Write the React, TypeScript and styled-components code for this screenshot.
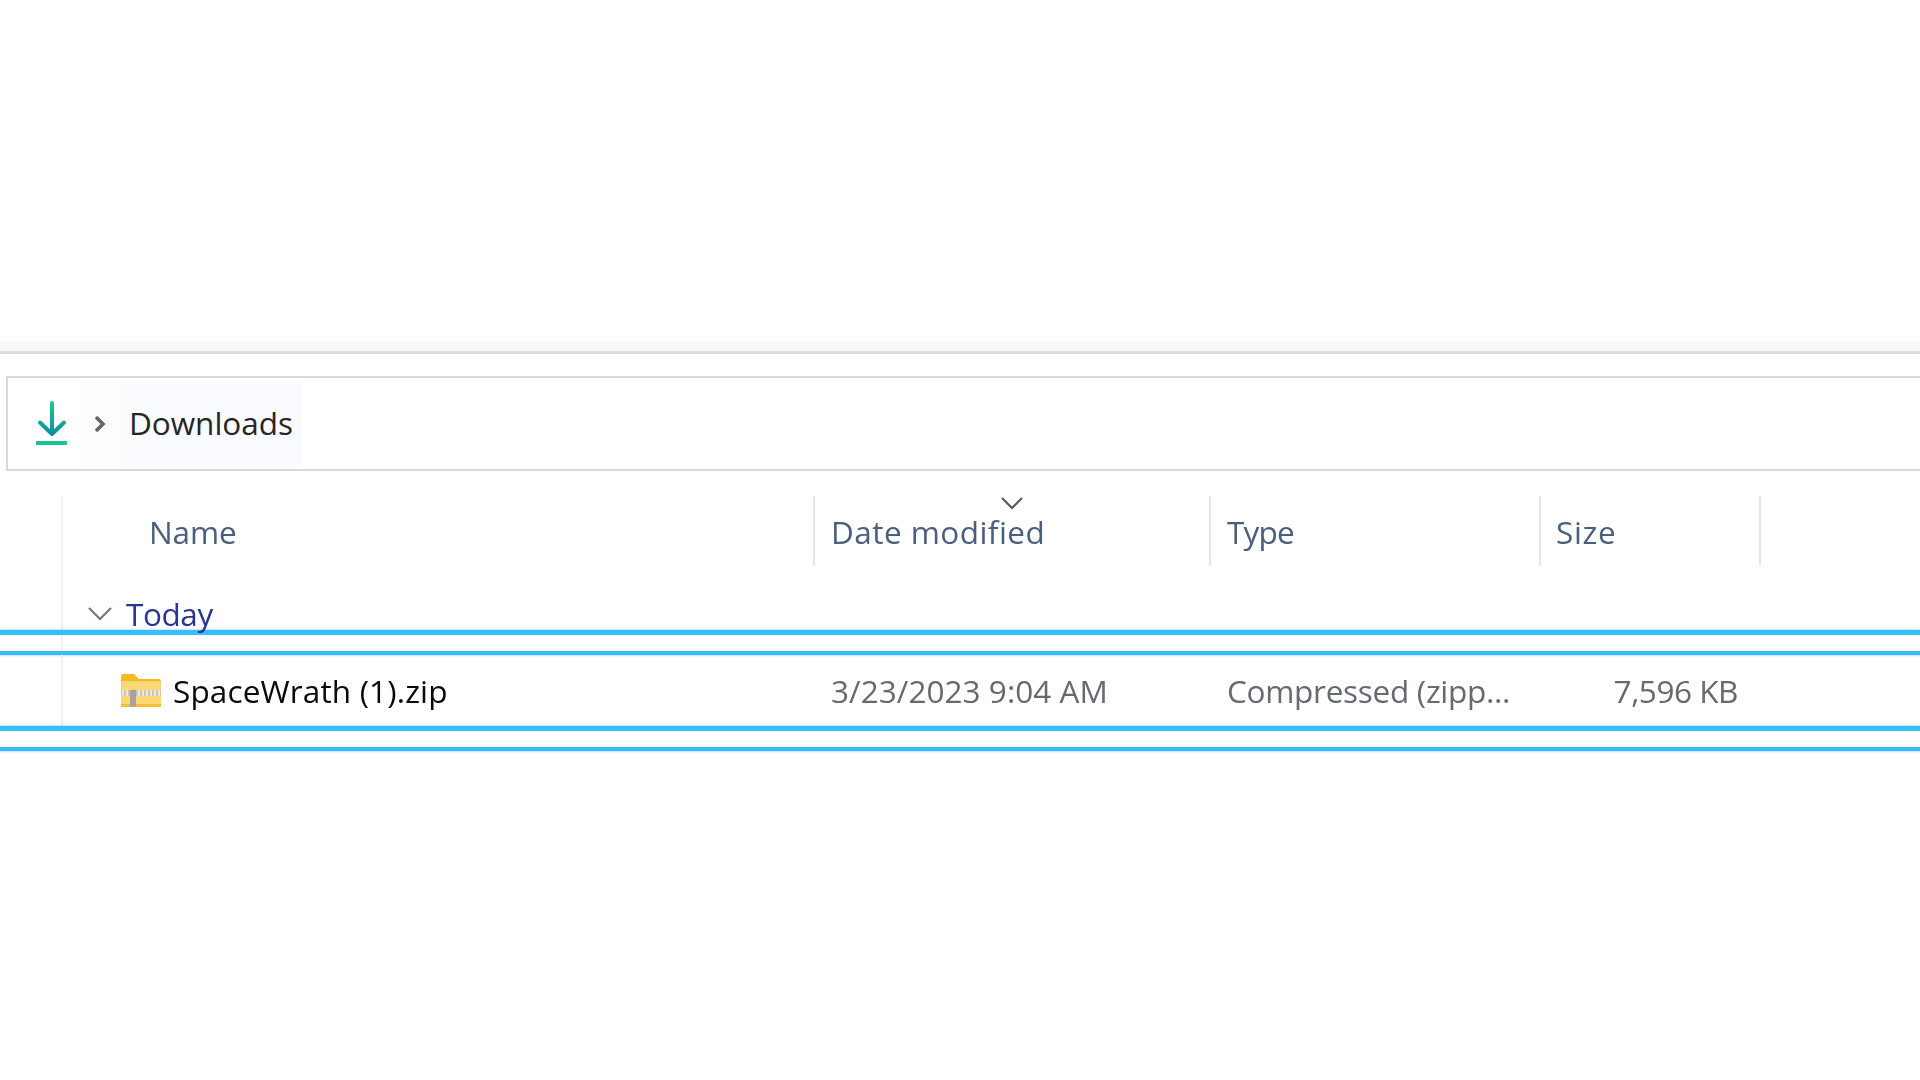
import styled, { createGlobalStyle } from "styled-components";

const GlobalStyle = createGlobalStyle`
  html, body {
    margin: 0;
    padding: 0;
    background: #fff;
  }
  body {
    font-family: "Open Sans", "Noto Sans", sans-serif;
    font-size: 30px;
    overflow: hidden;
  }
`;

const Page = styled.div`
  width: 1920px;
  height: 1080px;
  padding-top: 342px;
  box-sizing: border-box;
  overflow: hidden;
  filter: blur(0.45px);
`;

const TopBand = styled.div`
  height: 9px;
  background: #f8f8f8;
  border-bottom: 3px solid #dcdcdc;
`;

const AddressBar = styled.div`
  display: flex;
  height: 83px;
  margin: 22px 0 25px 6px;
  border: solid #d9d9d9;
  border-width: 2px 0 2px 2px;
  padding: 4px 0;
`;

const AddressCell = styled.div<{ $width: number; $tint?: string; $shift?: number }>`
  display: flex;
  align-items: center;
  justify-content: center;
  width: ${(p) => p.$width}px;
  padding-left: ${(p) => p.$shift || 0}px;
  box-sizing: border-box;
  background: ${(p) => p.$tint || "transparent"};
`;

const Crumb = styled.span`
  font-size: 31.5px;
  letter-spacing: 0;
  padding-bottom: 3px;
  color: #262626;
`;

const Rail = styled.div<{ $height: number }>`
  height: ${(p) => p.$height}px;
  margin-left: 61px;
  border-left: 2px solid #f0f0f0;
  box-sizing: border-box;
`;

const Columns = styled(Rail)`
  display: grid;
  grid-template-columns: 752px 396px 330px 220px;
`;

const HeaderCell = styled.div<{ $pad: number; $tracking: number }>`
  position: relative;
  display: flex;
  align-items: center;
  padding-left: ${(p) => p.$pad}px;
  border-right: 2px solid #e6e6e6;
  font-size: 31.5px;
  letter-spacing: ${(p) => p.$tracking}px;
  color: #4a5f7e;
`;

const SortMark = styled.svg`
  position: absolute;
  top: 1px;
  left: 186px;
`;

const GroupRow = styled(Rail)`
  display: flex;
  align-items: flex-end;
  padding: 0 0 0 25px;
  gap: 14px;
`;

const GroupLabel = styled.span`
  font-size: 31.5px;
  letter-spacing: -0.4px;
  line-height: 44px;
  margin-bottom: -6px;
  color: #29358f;
`;

const GroupChevron = styled.svg`
  margin-bottom: 9px;
`;

const SelectionBand = styled.div`
  height: 25px;
  box-sizing: border-box;
  border-top: 5px solid #36bdfb;
  border-bottom: 4px solid #36bdfb;
  box-shadow: 0 -1px 2px rgba(90, 160, 240, 0.35), 0 1px 2px rgba(90, 160, 240, 0.35);
`;

const DataCell = styled.div<{ $pad?: number; $right?: boolean; $tracking: number }>`
  display: flex;
  align-items: center;
  padding-left: ${(p) => p.$pad || 0}px;
  padding-right: ${(p) => (p.$right ? 23 : 0)}px;
  justify-content: ${(p) => (p.$right ? "flex-end" : "flex-start")};
  font-size: 31.5px;
  letter-spacing: ${(p) => p.$tracking}px;
  color: #666a70;
  white-space: nowrap;
`;

const FileName = styled(DataCell)`
  color: #0a0a0a;
  gap: 12px;
`;

const DownloadIcon = () => (
  <svg width="34" height="46" viewBox="0 0 34 46" fill="none">
    <defs>
      <linearGradient id="dl" x1="0" y1="0" x2="0" y2="1">
        <stop offset="0" stopColor="#1ec68f" />
        <stop offset="1" stopColor="#0b8f9c" />
      </linearGradient>
    </defs>
    <path
      d="M17 2V33M5 21.5 17 33 29 21.5"
      stroke="url(#dl)"
      strokeWidth="4"
      strokeLinecap="round"
      strokeLinejoin="round"
    />
    <rect x="1" y="40" width="31" height="4" rx="1" fill="#1fbf94" />
  </svg>
);

const ChevronRight = () => (
  <svg width="14" height="18" viewBox="0 0 14 18" fill="none">
    <path d="M3 2 10 9 3 16" stroke="#666" strokeWidth="3.6" />
  </svg>
);

const ZipFolder = () => (
  <svg width="40" height="33" viewBox="0 0 40 33">
    <path d="M0 2a2 2 0 0 1 2-2h11l5 5h20a2 2 0 0 1 2 2v4H0Z" fill="#f6b91f" />
    <rect x="0" y="7" width="40" height="26" rx="1.5" fill="#fbd875" />
    <rect x="0" y="30" width="40" height="3" fill="#f5bd3a" />
    <rect x="0" y="16" width="40" height="6" fill="#c9c6b8" />
    <path
      d="M2 16v6M6 16v6M18 16v6M22 16v6M26 16v6M30 16v6M34 16v6M38 16v6"
      stroke="#f4f1e4"
      strokeWidth="1.6"
    />
    <rect x="9" y="16" width="6" height="17" fill="#a3a39a" />
  </svg>
);

const App = () => {
  return (
    <>
      <GlobalStyle />
      <Page>
        <TopBand />
        <AddressBar>
          <AddressCell $width={72} $shift={16}>
            <DownloadIcon />
          </AddressCell>
          <AddressCell $width={40} $tint="#fdfdfe">
            <ChevronRight />
          </AddressCell>
          <AddressCell $width={182} $tint="#fafbfe">
            <Crumb>Downloads</Crumb>
          </AddressCell>
        </AddressBar>

        <Columns $height={70}>
          <HeaderCell $pad={86} $tracking={-0.15}>
            Name
          </HeaderCell>
          <HeaderCell $pad={16} $tracking={0.45}>
            Date modified
            <SortMark width="22" height="13" viewBox="0 0 22 13" fill="none">
              <path d="M1 1 11 11 21 1" stroke="#555" strokeWidth="2" />
            </SortMark>
          </HeaderCell>
          <HeaderCell $pad={16} $tracking={-0.8}>
            Type
          </HeaderCell>
          <HeaderCell $pad={15} $tracking={0.7}>
            Size
          </HeaderCell>
        </Columns>

        <GroupRow $height={64}>
          <GroupChevron width="24" height="14" viewBox="0 0 24 14" fill="none">
            <path d="M1 1 12 12 23 1" stroke="#777" strokeWidth="2.2" />
          </GroupChevron>
          <GroupLabel>Today</GroupLabel>
        </GroupRow>

        <SelectionBand>
          <Rail $height={16} />
        </SelectionBand>

        <Columns $height={71}>
          <FileName $pad={58} $tracking={0.15}>
            <ZipFolder />
            SpaceWrath (1).zip
          </FileName>
          <DataCell $pad={16} $tracking={0.05}>
            3/23/2023 9:04 AM
          </DataCell>
          <DataCell $pad={16} $tracking={-0.28}>
            Compressed (zipp...
          </DataCell>
          <DataCell $right $tracking={-0.45}>
            7,596 KB
          </DataCell>
        </Columns>

        <SelectionBand />
      </Page>
    </>
  );
};

export default App;
